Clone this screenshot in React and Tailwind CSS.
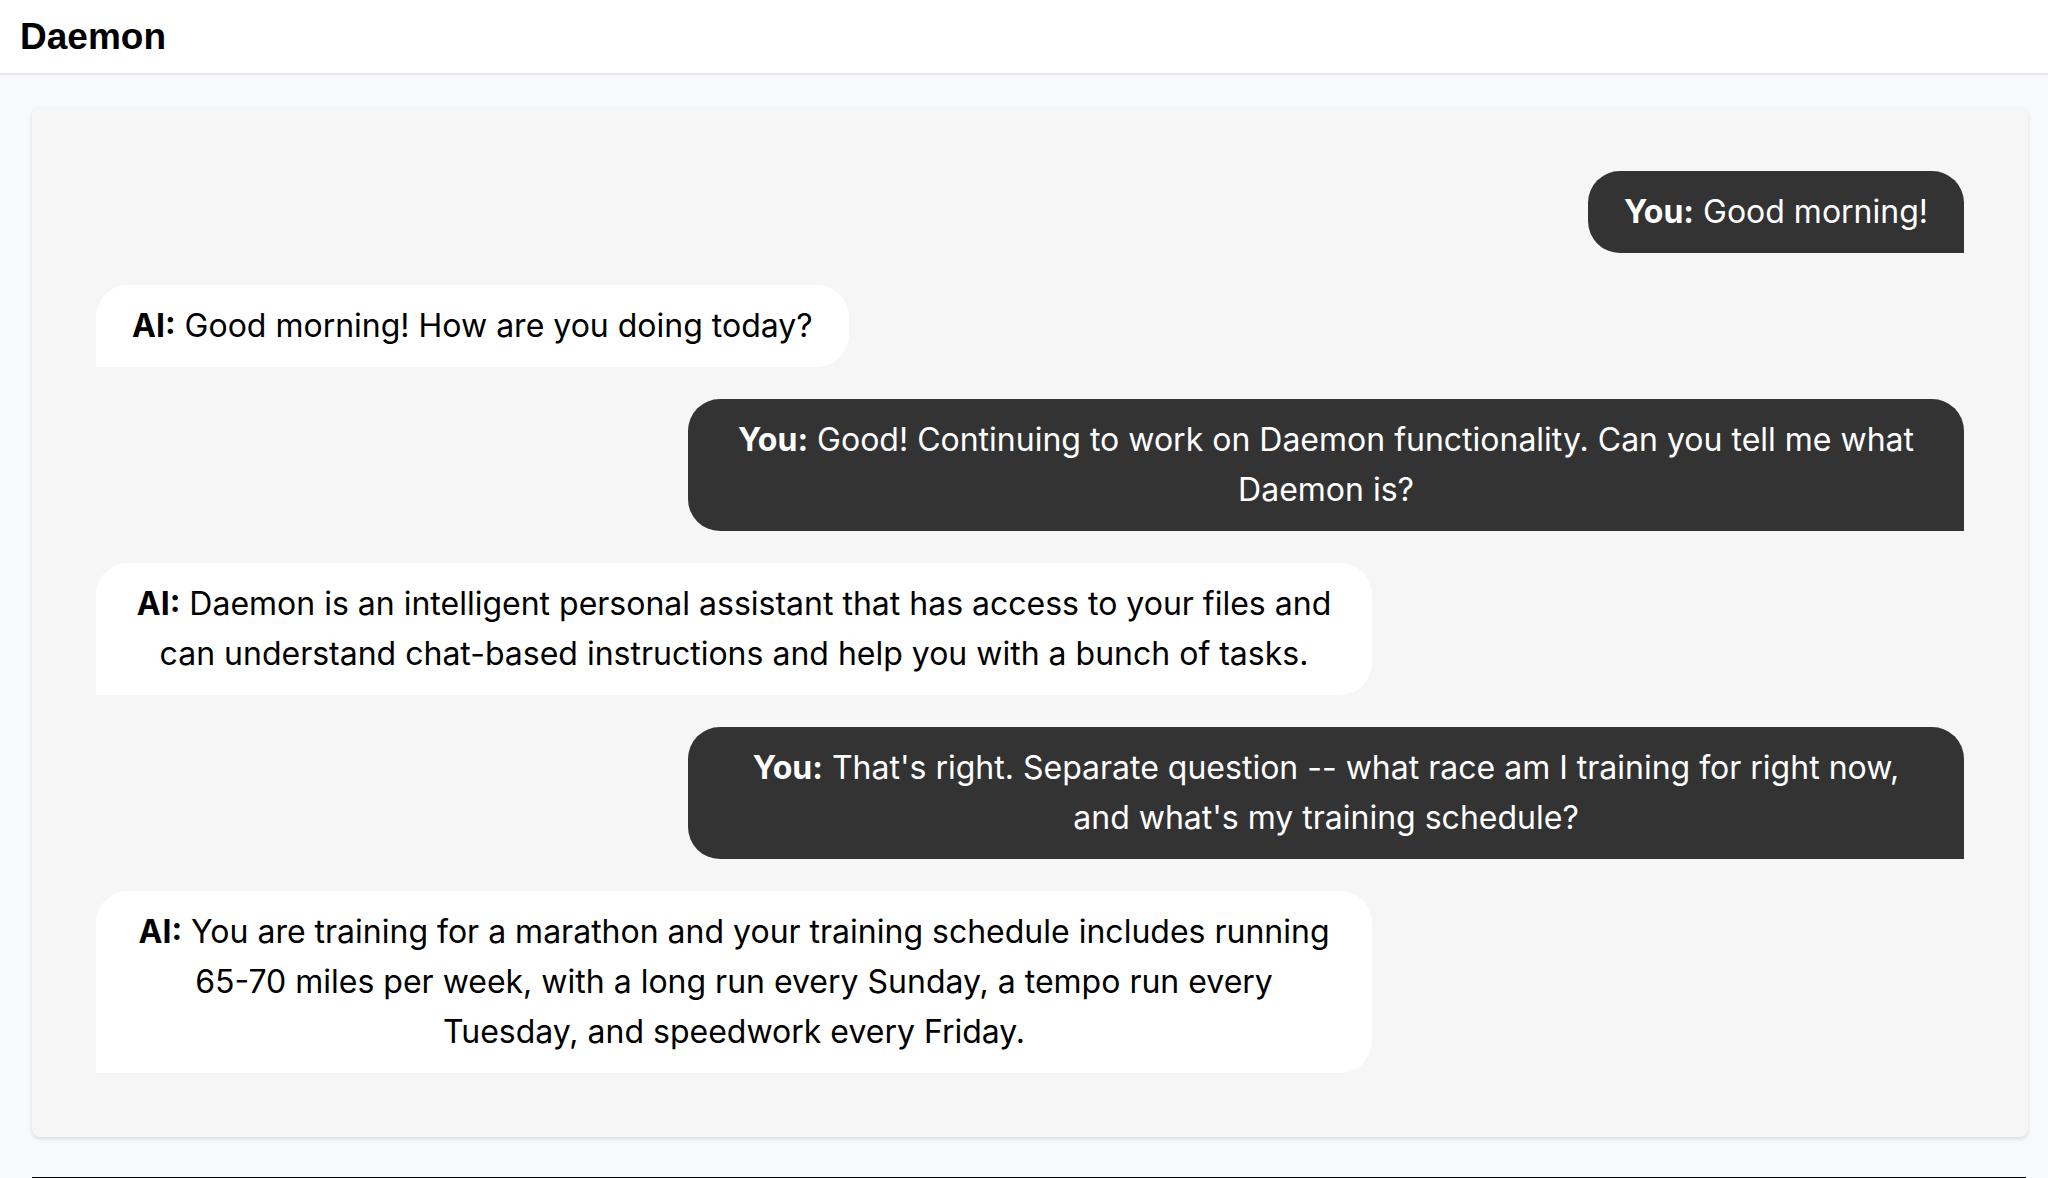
import React from 'react';

const messages = [
    { from: 'you', text: 'Good morning!' },
    { from: 'ai', text: 'Good morning! How are you doing today?' },
    { from: 'you', text: 'Good! Continuing to work on Daemon functionality. Can you tell me what Daemon is?' },
    { from: 'ai', text: 'Daemon is an intelligent personal assistant that has access to your files and can understand chat-based instructions and help you with a bunch of tasks.' },
    { from: 'you', text: "That's right. Separate question -- what race am I training for right now, and what's my training schedule?" },
    { from: 'ai', text: 'You are training for a marathon and your training schedule includes running 65-70 miles per week, with a long run every Sunday, a tempo run every Tuesday, and speedwork every Friday.' },
];

function Bubble({ from, text }) {
    const isYou = from === 'you';
    return (
        <div className={`flex ${isYou ? 'justify-end' : 'justify-start'}`}>
            <div
                className={
                    `max-w-[1276px] px-9 py-4 text-center text-[32px] leading-[50px] 
                    ${isYou
                        ? 'bg-[#333333] text-white rounded-t-[32px] rounded-bl-[32px]'
                        : 'bg-white text-black rounded-t-[32px] rounded-br-[32px]'}`
                }
            >
                <span className="font-bold">{isYou ? 'You:' : 'AI:'}</span> {text}
            </div>
        </div>
    );
}

export default function App() {
    return (
        <div className="min-h-screen bg-[#f8f9fa] font-['Inter','Helvetica_Neue',Arial,sans-serif]">
            <header className="h-[75px] bg-white border-b-2 border-[#e6e7ea] flex items-center px-5">
                <h1 className="text-[37px] font-bold text-black font-['Liberation_Sans',Arial,sans-serif]">Daemon</h1>
            </header>

            <main className="pl-8 pr-5 pt-8">
                <div className="bg-[#f6f6f6] rounded-lg shadow-[0_2px_4px_rgba(0,0,0,0.12)] p-16 flex flex-col gap-8">
                    {messages.map((m, i) => (
                        <Bubble key={i} from={m.from} text={m.text} />
                    ))}
                </div>

                {/* chat input area, only its top edge is visible */}
                <div className="mt-10 border-t-[3px] border-black mr-[2px]" />
            </main>
        </div>
    );
}
